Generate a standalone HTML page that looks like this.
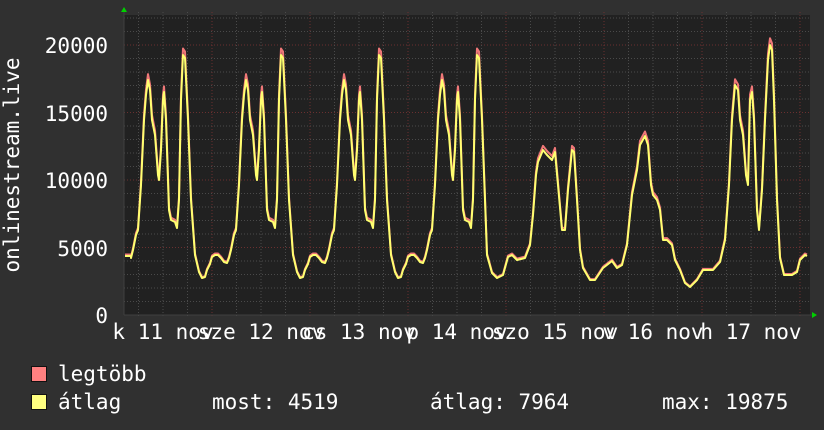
<!DOCTYPE html>
<html><head><meta charset="utf-8"><style>
html,body{margin:0;padding:0;background:#303030;}
svg{display:block}
text{font-family:"DejaVu Sans Mono","Liberation Mono",monospace;fill:#fff;font-size:21px}
</style></head><body>
<svg id="s" width="824" height="430" viewBox="0 0 824 430">
<rect x="0" y="0" width="824" height="430" fill="#303030"/>
<rect x="124" y="15" width="686" height="300" fill="#212121"/>
<g id="grid"></g>
<path id="pk" fill="none" stroke="#f07878" stroke-width="2" stroke-linejoin="round"/>
<path id="yl" fill="none" stroke="#ffff70" stroke-width="2" stroke-linejoin="round"/>
<line x1="124" y1="315" x2="812" y2="315" stroke="#404040" stroke-width="1"/>
<line x1="124" y1="12" x2="124" y2="315" stroke="#404040" stroke-width="1"/>
<polygon points="121,12 127,12 124,7" fill="#00d000"/>
<polygon points="812,312 812,318 817,315" fill="#00d000"/>
<g text-anchor="end">
<text x="108" y="53">20000</text>
<text x="108" y="121">15000</text>
<text x="108" y="188">10000</text>
<text x="108" y="256">5000</text>
<text x="108" y="323">0</text>
</g>
<text transform="translate(19,165) rotate(-90)" text-anchor="middle">onlinestream.live</text>
<g text-anchor="middle">
<text x="163" y="339">k 11 nov</text>
<text x="261" y="339">sze 12 nov</text>
<text x="359" y="339">cs 13 nov</text>
<text x="457" y="339">p 14 nov</text>
<text x="555" y="339">szo 15 nov</text>
<text x="653" y="339">v 16 nov</text>
<text x="751" y="339">h 17 nov</text>
</g>
<rect x="31.5" y="366.5" width="15" height="15" fill="#ff8080" stroke="#111"/>
<rect x="31.5" y="394.5" width="15" height="15" fill="#ffff80" stroke="#111"/>
<text x="58" y="381">legtöbb</text>
<text x="58" y="409">átlag</text>
<text x="212" y="409">most: 4519</text>
<text x="430" y="409">átlag: 7964</text>
<text x="662" y="409">max: 19875</text>
</svg>
<script>
var g=document.getElementById('grid'),h='';
for(var i=1;i<=22;i++){var y=315-i*13.5;var maj=i%5==0;h+='<line x1="124" x2="810" y1="'+y+'" y2="'+y+'" stroke="'+(maj?'#6a3030':'#4a4a4a')+'" stroke-dasharray="1,2"/>';}
for(var x=138.5;x<810;x+=24.5){var d=Math.round((x-114)/24.5);var maj=d%4==0;h+='<line y1="12" y2="318" x1="'+x+'" x2="'+x+'" stroke="'+(maj?'#6a3030':'#4a4a4a')+'" stroke-dasharray="1,2"/>';}
g.innerHTML=h;
var T=[[0,257],[3,255],[6,255],[9,258],[12,262],[15,263],[17,258],[19,250],[22,235],[24,230],[27,185],[30,120],[32,95],[34,80],[36,90],[38,120],[41,135],[44,175],[45,180],[47,150],[49,100],[50,92],[52,120],[55,210],[57,220],[61,222],[63,228],[65,200],[67,100],[69,55],[71,58],[74,120],[77,200],[81,255],[85,272],[88,278],[91,277],[93,270],[96,264]];
var P=[[125,256],[131,256]];
function addDay(M,from,to){for(var k=0;k<T.length;k++){var t=T[k];if(t[0]<from||t[0]>to)continue;P.push([M+t[0],t[1]]);}}
addDay(114,17,99);addDay(212,0,99);addDay(310,0,99);addDay(408,0,77);
P=P.concat([[487,255],[492,273],[497,278],[503,275],[508,257],[512,255],[517,260],[525,258],[530,245],[533,215],[536,175],[538,162],[543,150],[547,155],[552,160],[555,152],[558,185],[562,230],[565,230],[568,190],[572,150],[574,152],[577,200],[580,250],[583,268],[590,280],[595,280],[603,268],[612,261],[617,268],[622,265],[627,245],[632,195],[637,170],[640,145],[645,136],[648,145],[651,185],[653,195],[657,200],[660,210],[663,240],[667,240],[672,245],[675,260],[680,270],[685,283],[690,287],[697,280],[703,270],[713,270],[720,262],[725,240]]);
var T7=[[27,185],[30,120],[33,85],[36,90],[38,120],[41,135],[44,175],[46,185],[48,100],[50,92],[52,120],[55,210],[57,230],[60,190],[63,120],[66,60],[68,45],[70,50],[72,100],[75,200],[78,258],[82,275],[90,275],[95,272],[98,260],[103,255],[105,256]];
for(var k=0;k<T7.length;k++)P.push([702+T7[k][0],T7[k][1]]);
function pth(o){var s='';for(var i=0;i<P.length;i++){var y=P[i][1];var yy=o?(y-(315-y)*0.025):y;s+=(i?'L':'M')+P[i][0]+','+yy.toFixed(1);}return s;}
document.getElementById('pk').setAttribute('d',pth(1));
document.getElementById('yl').setAttribute('d',pth(0));
</script>
</body></html>
